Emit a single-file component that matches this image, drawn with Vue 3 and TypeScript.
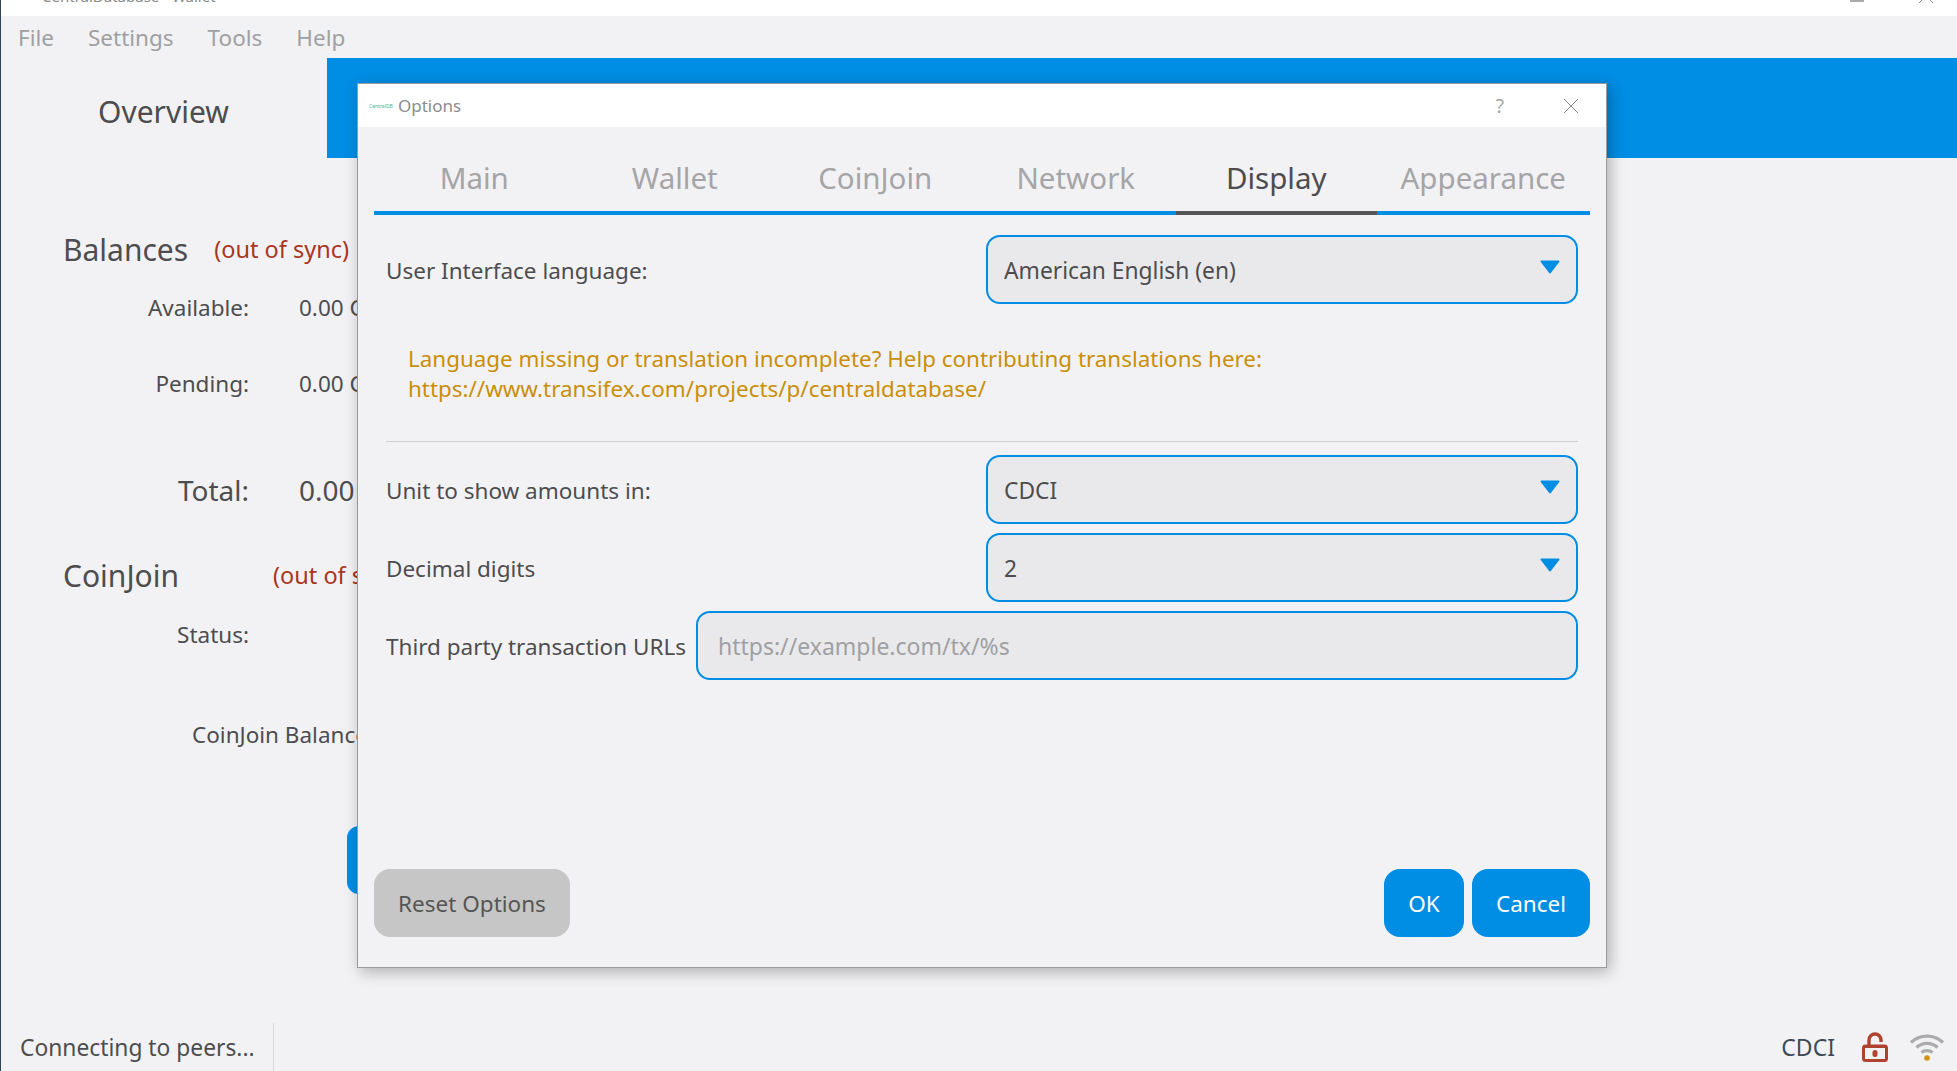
<script setup lang="ts">
const tabs: string[] = ['Main', 'Wallet', 'CoinJoin', 'Network', 'Display', 'Appearance']
const activeTab = 'Display'
const menus: string[] = ['File', 'Settings', 'Tools', 'Help']
</script>

<template>
  <div class="window">
    <div class="titlebar">
      <span class="app-title">CentralDatabase - Wallet</span>
      <span class="win-min"></span>
      <svg class="win-close" width="16" height="16" viewBox="0 0 16 16"><path d="M1 1L15 15M15 1L1 15" stroke="#999" fill="none" /></svg>
    </div>
    <nav class="menubar">
      <span v-for="m in menus" :key="m">{{ m }}</span>
    </nav>
    <header class="header">
      <div class="overview">Overview</div>
      <div class="bluebar"></div>
    </header>
    <main class="content">
      <div class="heading-row">
        <span class="heading">Balances</span>
        <span class="sync">(out of sync)</span>
      </div>
      <div class="row r-available"><span class="lab">Available:</span><span class="val">0.00 CDCI</span></div>
      <div class="row r-pending"><span class="lab">Pending:</span><span class="val">0.00 CDCI</span></div>
      <div class="row r-total"><span class="lab">Total:</span><span class="val">0.00 CDCI</span></div>
      <div class="heading-row cj">
        <span class="heading">CoinJoin</span>
        <span class="sync sync2">(out of sync)</span>
      </div>
      <div class="row r-status"><span class="lab">Status:</span></div>
      <div class="cj-balance">CoinJoin Balance:</div>
      <div class="start-btn"></div>
    </main>
    <footer class="statusbar">
      <span class="connecting">Connecting to peers...</span>
      <span class="status-right">
        <span class="unit">CDCI</span>
        <svg class="lock" width="26" height="30" viewBox="0 0 26 30">
          <path d="M7 13V8a6 6 0 0 1 12 0v2" fill="none" stroke="#b0432f" stroke-width="3.4" />
          <rect x="1.500" y="14" width="23" height="14.500" rx="2" fill="none" stroke="#b0432f" stroke-width="3" />
          <rect x="1" y="13" width="24" height="3" fill="#b0432f" />
          <rect x="10.500" y="18" width="5" height="7" rx="2.500" fill="#b0432f" />
        </svg>
        <svg class="wifi" width="36" height="28" viewBox="0 0 36 28">
          <path d="M2 9.500C11 1 25 1 34 9.500" fill="none" stroke="#ababab" stroke-width="3.400" />
          <path d="M7.500 14.500C13.500 9 22.500 9 28.500 14.500" fill="none" stroke="#ababab" stroke-width="3.400" />
          <path d="M12.500 19.500C15.500 17 20.500 17 23.500 19.500" fill="none" stroke="#ababab" stroke-width="3.400" />
          <circle cx="18" cy="25" r="2.800" fill="#d3920f" />
        </svg>
      </span>
    </footer>

    <section class="dialog">
      <div class="dlg-title">
        <span class="dlg-logo">CentralDB</span>
        <span class="dlg-name">Options</span>
        <span class="dlg-help">?</span>
        <svg class="dlg-close" width="16" height="16" viewBox="0 0 16 16"><path d="M1 1L15 15M15 1L1 15" stroke="#8a8a8a" fill="none" /></svg>
      </div>
      <div class="dlg-body">
        <div class="tabs">
          <div v-for="t in tabs" :key="t" class="tab" :class="{ active: t === activeTab }">{{ t }}</div>
        </div>
        <div class="form-row first">
          <label>User Interface language:</label>
          <div class="combo"><span>American English (en)</span><svg class="arrow" width="22" height="14" viewBox="0 0 22 14"><path d="M2.500 1.500H19.500L11 12.500Z" fill="#008de4" stroke="#008de4" stroke-width="2" stroke-linejoin="round" /></svg></div>
        </div>
        <p class="hint">Language missing or translation incomplete? Help contributing translations here:<br />https://www.transifex.com/projects/p/centraldatabase/</p>
        <hr class="sep" />
        <div class="form-row">
          <label>Unit to show amounts in:</label>
          <div class="combo"><span>CDCI</span><svg class="arrow" width="22" height="14" viewBox="0 0 22 14"><path d="M2.500 1.500H19.500L11 12.500Z" fill="#008de4" stroke="#008de4" stroke-width="2" stroke-linejoin="round" /></svg></div>
        </div>
        <div class="form-row">
          <label>Decimal digits</label>
          <div class="combo"><span>2</span><svg class="arrow" width="22" height="14" viewBox="0 0 22 14"><path d="M2.500 1.500H19.500L11 12.500Z" fill="#008de4" stroke="#008de4" stroke-width="2" stroke-linejoin="round" /></svg></div>
        </div>
        <div class="form-row url-row">
          <label>Third party transaction URLs</label>
          <div class="urlbox">https://example.com/tx/%s</div>
        </div>
        <div class="buttons">
          <button class="btn reset">Reset Options</button>
          <span class="spacer"></span>
          <button class="btn ok">OK</button>
          <button class="btn cancel">Cancel</button>
        </div>
      </div>
    </section>
  </div>
</template>

<style>
html, body { margin: 0; background: #f2f2f4; overflow: hidden; }
</style>

<style scoped>
.window {
  position: relative;
  width: 1957px;
  height: 1071px;
  box-sizing: border-box;
  border-left: 1px solid #2e4358;
  background: #f2f2f4;
  display: flex;
  flex-direction: column;
  overflow: hidden;
  font-family: "Noto Sans", "Open Sans", sans-serif;
  font-size: 22.5px;
  color: #4d4d4f;
}
.titlebar {
  height: 16px;
  background: #fff;
  position: relative;
  flex: none;
  overflow: hidden;
}
.app-title { position: absolute; left: 41px; top: -14px; font-size: 15px; color: #888; }
.win-min { position: absolute; left: 1849px; top: 0; width: 14px; height: 2px; background: #aaa; }
.win-close { position: absolute; left: 1917px; top: -12px; }
.menubar { height: 42px; flex: none; display: flex; gap: 34px; padding-left: 17px; align-items: center; color: #a0a0a2; font-size: 22.5px; }
.header { height: 100px; flex: none; display: flex; }
.overview { width: 326px; box-sizing: border-box; padding-left: 97px; padding-top: 33px; font-size: 30px; color: #4d4d4f; }
.bluebar { flex: 1; background: #008de4; }
.content { flex: 1; padding-left: 62px; min-height: 0; position: relative; }
.heading-row { display: flex; align-items: center; margin-top: 68px; height: 46px; }
.heading { font-size: 30px; }
.sync { font-size: 23.5px; color: #a9361f; margin-left: 26px; }
.sync2 { margin-left: 94px; }
.row { display: flex; align-items: baseline; }
.lab { width: 186px; text-align: right; }
.val { margin-left: 50px; white-space: nowrap; }
.r-available { margin-top: 20px; height: 40px; }
.r-pending { margin-top: 36px; height: 40px; }
.r-total { margin-top: 63px; height: 60px; font-size: 28px; }
.cj { margin-top: 21px; }
.r-status { margin-top: 21px; }
.cj-balance { margin-top: 69px; margin-left: 129px; white-space: nowrap; }
.start-btn { position: absolute; left: 346px; top: 668px; width: 120px; height: 68px; background: #008de4; border-radius: 12px; }
.statusbar { height: 48px; flex: none; display: flex; align-items: center; }
.connecting { width: 273px; box-sizing: border-box; padding-left: 19px; height: 100%; display: flex; align-items: center; border-right: 1px solid #d8d8da; white-space: nowrap; font-size: 22.8px; }
.status-right { margin-left: auto; display: flex; align-items: center; padding-right: 12px; }
.unit { margin-right: 27px; color: #3f4a57; font-size: 23px; }
.lock { margin-right: 21px; }
.dialog {
  position: absolute;
  left: 356px;
  top: 83px;
  width: 1250px;
  height: 885px;
  border: 1px solid #9a9a9a;
  box-sizing: border-box;
  background: #f2f2f4;
  box-shadow: 3px 4px 14px rgba(0, 0, 0, 0.28);
  display: flex;
  flex-direction: column;
}
.dlg-title { height: 43px; flex: none; background: #fff; display: flex; align-items: center; padding-left: 11px; }
.dlg-logo { font-size: 5px; color: #3fb88a; width: 29px; overflow: hidden; white-space: nowrap; }
.dlg-name { font-size: 17px; color: #8c8c8e; }
.dlg-help { margin-left: auto; font-size: 19px; color: #a5a5a5; }
.dlg-close { margin-left: 59px; margin-right: 27px; }
.dlg-body { flex: 1; padding: 0 16px; display: flex; flex-direction: column; min-height: 0; }
.tabs { display: flex; height: 88px; flex: none; box-sizing: border-box; }
.tab {
  flex: 1 0 auto;
  min-width: 200.500px;
  box-sizing: border-box;
  padding: 17px 20px 0;
  display: flex;
  align-items: center;
  justify-content: center;
  font-size: 29.5px;
  color: #a5a5a7;
  border-bottom: 4px solid #008de4;
}
.tab.active { color: #4d4d4f; border-bottom-color: #555; }
.form-row { display: flex; align-items: center; justify-content: space-between; padding: 0 12px 0 12px; height: 70px; margin-bottom: 8px; }
.form-row.first { margin-top: 19px; margin-bottom: 0; }
label { white-space: nowrap; padding-top: 2px; }
.combo {
  width: 592px;
  height: 69px;
  box-sizing: border-box;
  border: 2px solid #008de4;
  border-radius: 14px;
  background: #e9e9eb;
  display: flex;
  align-items: center;
  justify-content: space-between;
  padding: 2px 15px 0 16px;
  font-size: 22.8px;
}
.arrow { margin-top: -6px; }
.hint { margin: 40px 0 0; padding-left: 34px; height: 69px; line-height: 30px; color: #c98f0a; white-space: nowrap; font-size: 22.4px; }
.sep { border: 0; border-top: 1px solid #d0d0d2; margin: 28px 12px 12px 12px; width: calc(100% - 24px); }
.url-row { justify-content: flex-start; gap: 10px; }
.urlbox {
  flex: 1;
  height: 69px;
  box-sizing: border-box;
  border: 2px solid #008de4;
  border-radius: 14px;
  background: #e9e9eb;
  display: flex;
  align-items: center;
  padding: 2px 0 0 20px;
  color: #a0a0a2;
  font-size: 23px;
}
.buttons { margin-top: auto; margin-bottom: 30px; display: flex; gap: 8px; }
.spacer { flex: 1; }
.btn { height: 68px; border: 0; border-radius: 16px; font: inherit; font-size: 22.5px; padding: 0; }
.reset { width: 196px; background: #c6c6c6; color: #555; }
.ok { width: 80px; background: #008de4; color: #fff; }
.cancel { width: 118px; background: #008de4; color: #fff; }
</style>
